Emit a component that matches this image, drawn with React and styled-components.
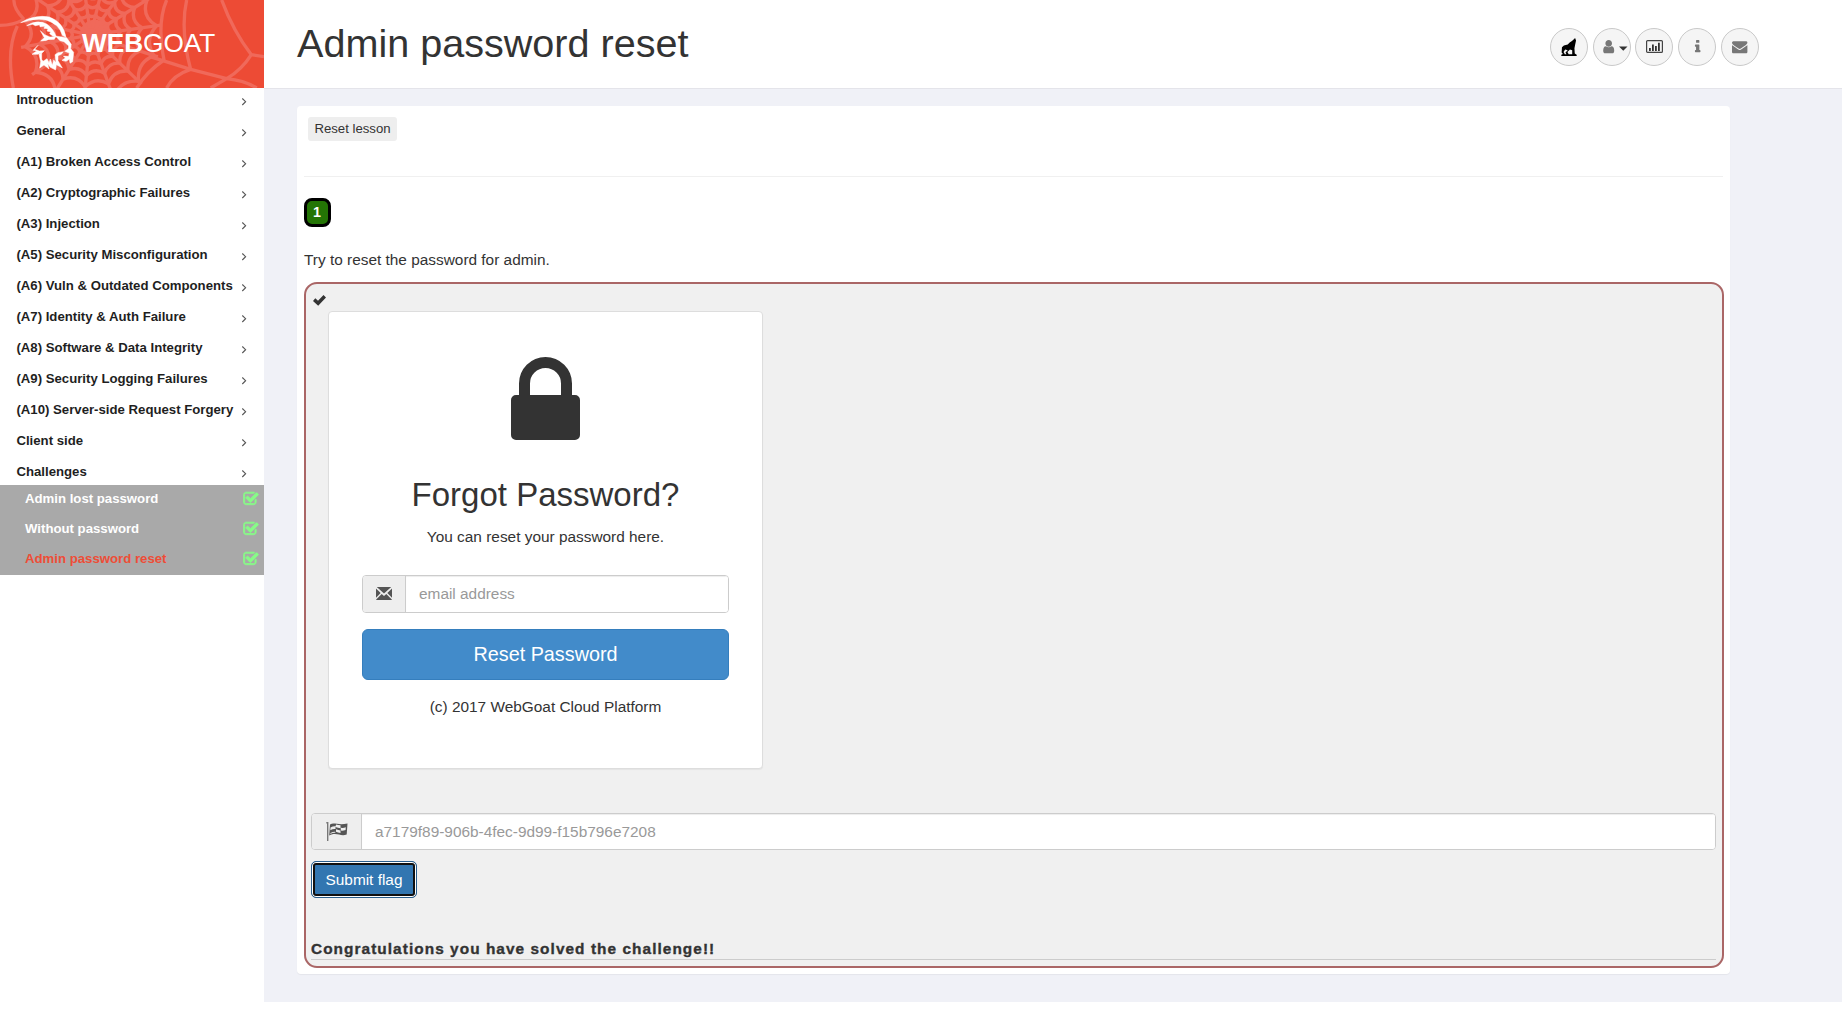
import React from "react";
import styled, { createGlobalStyle } from "styled-components";

const Global = createGlobalStyle`
  * { box-sizing: border-box; }
  body { margin: 0; background: #fff; color: #333; font: 15.4px/22px "Liberation Sans", Arial, sans-serif; overflow: hidden; }
  button, input { font-family: inherit; margin: 0; }
  svg { display: block; flex: none; }
`;

const Page = styled.div`display: grid; grid-template-columns: 264px 1fr; height: 1009px;`;
const Sidebar = styled.aside`background: #fff;`;
const Brand = styled.div`
  height: 88px; background: #ed4b35; display: grid; overflow: hidden; align-items: center;
  > * { grid-area: 1 / 1; }
`;
const BrandName = styled.div`
  padding: 0 0 3px 82px; color: #fff; font-size: 26.2px; line-height: 30px;
`;
const Menu = styled.nav`display: flex; flex-direction: column;`;
const MenuItem = styled.a`
  display: flex; justify-content: space-between; height: ${(p) => (p.$open ? 25 : 31)}px;
  padding: 0 17px 0 16.4px; color: #1f1f1f; font-size: 13.2px; line-height: 23px; font-weight: 700; white-space: nowrap;
  svg { margin-top: 9px; }
`;
const SubMenu = styled.div`background: #a9a9a9;`;
const SubItem = styled.a`
  display: flex; justify-content: space-between; height: 30px; padding: 0 5.500px 0 25px;
  color: ${(p) => (p.$active ? "#ee4d37" : "#fff")}; font-size: 13.2px; line-height: 27px; font-weight: 700;
  svg { margin-top: 6px; }
`;
const Main = styled.div`display: flex; flex-direction: column; min-width: 0;`;
const Header = styled.header`
  height: 89px; flex: none; border-bottom: 1px solid #e4e4ea; background: #fff;
  display: flex; justify-content: space-between; padding: 0 83px 0 33px;
`;
const Title = styled.h1`margin: 21px 0 0; font-size: 39.6px; line-height: 44px; font-weight: 400;`;
const Tools = styled.div`display: flex; gap: 4.8px; padding-top: 28px;`;
const Tool = styled.button`
  width: 38px; height: 38px; border: 1px solid #c9c9c9; border-radius: 50%; background: #f5f5f5; color: #777;
  padding: 0 0 1px ${(p) => p.$indent || 0}px; display: flex; align-items: center; justify-content: center;
`;
const Body = styled.main`height: 913px; background: #f0f1f7; padding: 17px 112px 28px 33px;`;
const Card = styled.section`
  height: 868px; background: #fff; border-radius: 4px; padding: 11px 6px 0 7px; box-shadow: 0 1px 1px rgba(0,0,0,.05);
`;
const ResetLesson = styled.button`
  display: block; margin-left: 4px; width: 89px; height: 24px; border: 0; border-radius: 3px; padding: 0;
  background: #eee; color: #333; font-size: 13.2px; line-height: 24px;
`;
const Rule = styled.div`height: 1px; margin: 35px 1px 0 0; background: #f0f0f0;`;
const PageBadge = styled.div`
  width: 27px; height: 29px; margin-top: 21px; border: 3px solid #000; border-radius: 8px; background: #247505;
  padding-right: 1px; color: #fff; font-size: 14.3px; font-weight: 700; line-height: 22px; text-align: center;
`;
const Intro = styled.p`margin: 22px 0 11px;`;
const Attack = styled.div`
  width: 1420px; height: 686px; border: 2px solid #a66; border-radius: 13px; background: #f0f0f0; padding: 0 6px 0 5px;
`;
const CheckRow = styled.div`height: 27px; padding: 11px 0 0 1.500px;`;
const Panel = styled.div`
  width: 435px; height: 458px; margin-left: 17px; border: 1px solid #ddd; border-radius: 4px; background: #fff;
  box-shadow: 0 1px 1px rgba(0,0,0,.05); padding: 45px 33px 0; display: flex; flex-direction: column; align-items: center;
`;
const PanelTitle = styled.h2`margin: 37px 0 13px; font-size: 33px; line-height: 36px; font-weight: 400;`;
const InputGroup = styled.div`
  display: flex; width: 100%; height: ${(p) => p.$height}px; margin-top: ${(p) => p.$top}px;
  border: 1px solid #ccc; border-radius: 4px; background: #fff; overflow: hidden;
`;
const Addon = styled.span`
  width: ${(p) => p.$width}px; flex: none; border-right: 1px solid #ccc; background: #eee; color: #555;
  display: flex; align-items: center; justify-content: center;
`;
const Field = styled.input`
  flex: 1; min-width: 0; border: 0; outline: 0; padding: 0 13px; font-size: 15.4px; background: #fff;
  box-shadow: inset 0 1px 1px rgba(0,0,0,.075);
  &::placeholder { color: #999; opacity: 1; }
`;
const ResetPassword = styled.button`
  width: 100%; height: 51px; margin: 16.5px 0 16px; border: 1px solid #357ebd; border-radius: 6px; background: #428bca;
  color: #fff; font-size: 19.8px; line-height: 28px; padding: 0 0 1px;
`;
const Submit = styled.button`
  display: block; width: 106px; height: 37px; margin-top: 11px; border: 1px solid #285e8e; border-radius: 5px; padding: 0;
  background: #3276b1; color: #fff; font-size: 15.4px; box-shadow: inset 0 0 0 1px #fff, inset 0 0 0 3px #101010;
`;
const Feedback = styled.div`
  margin-top: 41px; height: 21px; border-bottom: 1px solid #ccc; font-weight: 700; line-height: 20px; letter-spacing: 1.05px;
  -webkit-text-stroke: .35px #333;
`;

const polar = (r, a) => [272 + r * Math.cos(a), 105 + r * Math.sin(a)];
const angles = [-168, -146, -122, -98, -76, -54, -32, -8, 18, 44, 70, 96, 122, 146, 170, 192].map((d) => (d * Math.PI) / 180);
const rings = [62, 92, 122, 156, 200];
const ringPath = (r) =>
  angles.slice(1).map((a, i) => {
    const p = polar(r, angles[i]);
    const q = polar(r, a);
    const c = polar(r * 0.8, (angles[i] + a) / 2);
    return `M${p} Q${c} ${q}`;
  }).join(" ");

const Web = () => (
  <svg width="264" height="88" viewBox="0 0 792 264" fill="none" stroke="#f0695a" strokeWidth="10">
    <circle cx="285" cy="105" r="46" fill="#f0695a" stroke="none" />
    {angles.slice(0, -1).map((a) => <path key={a} d={`M${polar(20, a)} L${polar(212, a)}`} />)}
    {rings.map((r) => <path key={r} d={ringPath(r)} />)}
    <path d="M0 76Q40 76 72 58M72 58Q40 25 42 0M52 78Q18 150 40 264M500 0Q470 70 492 180Q440 215 410 264M560 0Q540 90 572 208Q520 225 500 264M665 0Q700 95 754 164L792 170M754 164Q725 210 680 236L632 264M450 170L572 208L680 236Q735 242 770 264" />
  </svg>
);

const Goat = () => (
  <svg width="264" height="88" viewBox="0 0 792 264" fill="#fff" stroke="#fff" strokeWidth="1.5">
    <path d="M62 68Q105 43 148 51Q190 66 198 112L187 106Q178 72 138 60Q100 55 62 68Z" />
    <path d="M80 77Q112 57 140 72Q162 88 169 111L158 108L149 101L152 96L141 93L144 87L132 85L134 79L120 80L119 74L106 77L98 73Z" />
    <path d="M121 92L134 104L150 111L167 110L163 118L145 119L137 122L122 123L133 113Z" />
    <path d="M166 108L200 113L214 133L212 146L221 157L218 185L210 190L208 178L198 184L186 181L196 174L190 168L206 169L208 159L194 154L205 146L206 138L192 125L180 122Z" />
    <path d="M114 136L104 148L118 153L133 152L127 158L113 163L96 163L110 153L99 151Z" />
    <path d="M117 163L125 158L125 178L129 184L141 176L147 188L151 177L157 196L161 180L168 187L165 164L174 158L190 155L184 163L174 167L174 182L187 204L169 194L167 210L151 202L143 191L147 207L132 195L119 204L122 185Z" />
  </svg>
);

const Fa = ({ d, size, color, bold }) => (
  <svg width={size} height={size} viewBox="0 0 1792 1792" fill={color || "currentColor"} stroke={color} strokeWidth={bold || 0}><path d={d} /></svg>
);
const CHECK_SQUARE = "M1472 930v318q0 119-84.5 203.5t-203.5 84.5h-832q-119 0-203.5-84.5t-84.5-203.5v-832q0-119 84.5-203.5t203.5-84.5h832q63 0 117 25 15 7 18 23 3 17-9 29l-49 49q-10 10-23 10-3 0-9-2-23-6-45-6h-832q-66 0-113 47t-47 113v832q0 66 47 113t113 47h832q66 0 113-47t47-113v-254q0-13 9-22l64-64q10-10 23-10 6 0 12 3 20 8 20 29zm231-489l-814 814q-24 24-57 24t-57-24l-430-430q-24-24-24-57t24-57l110-110q24-24 57-24t57 24l263 263 647-647q24-24 57-24t57 24l110 110q24 24 24 57t-24 57z";
const USER = "M1536 1399q0 109-62.5 187t-150.5 78h-854q-88 0-150.5-78t-62.5-187q0-85 8.5-160.5t31.5-152 58.5-131 94-89 134.5-34.5q131 128 313 128t313-128q76 0 134.5 34.5t94 89 58.5 131 31.5 152 8.5 160.5zm-256-887q0 159-112.5 271.5t-271.5 112.5-271.5-112.5-112.5-271.5 112.5-271.5 271.5-112.5 271.5 112.5 112.5 271.5z";
const INFO = "M1216 1344v128q0 26-19 45t-45 19h-512q-26 0-45-19t-19-45v-128q0-26 19-45t45-19h64v-384h-64q-26 0-45-19t-19-45v-128q0-26 19-45t45-19h384q26 0 45 19t19 45v576h64q26 0 45 19t19 45zm-128-1152v192q0 26-19 45t-45 19h-256q-26 0-45-19t-19-45v-192q0-26 19-45t45-19h256q26 0 45 19t19 45z";
const ENVELOPE = "M1792 710v794q0 66-47 113t-113 47h-1472q-66 0-113-47t-47-113v-794q44 49 101 87 362 246 497 345 57 42 92.5 65.5t94.5 48 110 24.5h2q51 0 110-24.5t94.5-48 92.5-65.5q170-123 498-345 57-39 100-87zm0-294q0 79-49 151t-122 123q-376 261-468 325-10 7-42.5 31t-54 38.5-52 32.5-57.5 27-50 9h-2q-23 0-50-9t-57.5-27-52-32.5-54-38.5-42.5-31q-91-64-262-182.5t-205-142.5q-62-42-117-115.5t-55-136.5q0-78 41.5-130t118.5-52h1472q65 0 112.5 47t47.5 113z";

const Chevron = () => (
  <svg width="6" height="9" viewBox="0 0 6 9" fill="none" stroke="#555" strokeWidth="1.1"><path d="M1.300 1.500L4.600 4.700L1.300 8" /></svg>
);
const Wolf = () => (
  <svg width="16" height="18" viewBox="0 0 50 56" fill="#000">
    <path d="M44 0L47 8L44 22L42 32L43 48L49 52V56H1V52L6 50L2 45L3 29L9 23L21 20L28 13L32 11L37 7ZM13 36L8 44L12 51H17L14 45L21 38ZM28 36L20 44L24 51H35V38Z" fillRule="evenodd" />
  </svg>
);
const Chart = () => (
  <svg width="17" height="13" viewBox="0 0 17 13">
    <rect x=".6" y=".6" width="15.8" height="11.800" rx="1" fill="none" stroke="#444" strokeWidth="1.2" />
    <path d="M3 8h1.800v3H3zM6 4.500h1.800V11H6zM9 6h1.800v5H9zM12 2.800h1.800V11H12z" fill="#333" />
  </svg>
);
const Lock = () => (
  <svg width="69" height="83" viewBox="0 0 69 83" fill="#333">
    <path d="M8 38V26.500a26.500 26.500 0 0 1 53 0V38h3a5 5 0 0 1 5 5v35a5 5 0 0 1-5 5H5a5 5 0 0 1-5-5V43a5 5 0 0 1 5-5ZM19 38H50V26.500a15.500 15.500 0 0 0-31 0Z" />
  </svg>
);
const Mail = () => (
  <svg width="16" height="13" viewBox="0 0 16 13" fill="#555">
    <path d="M.8 0H15.200L8 6.600ZM0 1.500L4.700 6L0 10.800ZM16 1.500V10.800L11.300 6ZM5.700 7L8 9.100L10.300 7L15.800 12.400V13H.2V12.400Z" />
  </svg>
);
const Flag = () => (
  <svg width="22" height="19" viewBox="0 0 22 19">
    <path d="M.3 0H2.400V19H1V1.500H.3Z" fill="#777" />
    <path d="M4 2.500C8-.2 12 3.800 21.500 1.500L20.700 12.500C14 15 11 9.500 3.200 13.500Z" fill="#555" />
    <path d="M4.500 5.500Q7 4 9.500 4.200V7Q7 6.600 4.300 8.300ZM10 2.600Q12 3.200 14.500 3.300V6.200Q12 6 9.500 5ZM10 7.300Q12.500 8.300 14.500 8.600V11Q12 10.500 10 9.700ZM14.800 5.800Q17.500 6.200 19.800 5.200L19.600 8Q17 9 14.800 8.600ZM4.500 11Q7 9.600 9.300 9.700V10.800Q7 10.500 4.300 11.900Z" fill="#eee" />
  </svg>
);
const Tick = () => (
  <svg width="13" height="11" viewBox="0 0 13 11" fill="#333"><path d="M0 6L2.300 3.300L5 5.800L10.500 0L13 2.400L5.200 10.800Z" /></svg>
);

const lessons = ["Introduction", "General", "(A1) Broken Access Control", "(A2) Cryptographic Failures", "(A3) Injection", "(A5) Security Misconfiguration", "(A6) Vuln & Outdated Components", "(A7) Identity & Auth Failure", "(A8) Software & Data Integrity", "(A9) Security Logging Failures", "(A10) Server-side Request Forgery", "Client side", "Challenges"];
const challenges = ["Admin lost password", "Without password", "Admin password reset"];

export default function App() {
  return (
    <Page>
      <Global />
      <Sidebar>
        <Brand>
          <Web />
          <Goat />
          <BrandName><b>WEB</b>GOAT</BrandName>
        </Brand>
        <Menu>
          {lessons.map((name) => (
            <MenuItem key={name} $open={name === "Challenges"}>{name}<Chevron /></MenuItem>
          ))}
          <SubMenu>
            {challenges.map((name, i) => (
              <SubItem key={name} $active={i === 2}>{name}<Fa d={CHECK_SQUARE} size={16} color="#88fb88" bold={90} /></SubItem>
            ))}
          </SubMenu>
        </Menu>
      </Sidebar>
      <Main>
        <Header>
          <Title>Admin password reset</Title>
          <Tools>
            <Tool><Wolf /></Tool>
            <Tool $indent={5}>
              <svg width="27" height="14" viewBox="0 0 27 14">
                <svg x="0" y="-1" width="15.400" height="15.400" viewBox="0 0 1792 1792" fill="#777"><path d={USER} /></svg>
                <path d="M18 6.500H26.500L22.250 10.800Z" fill="#333" />
              </svg>
            </Tool>
            <Tool><Chart /></Tool>
            <Tool><Fa d={INFO} size={15.4} /></Tool>
            <Tool><Fa d={ENVELOPE} size={15.4} /></Tool>
          </Tools>
        </Header>
        <Body>
          <Card>
            <ResetLesson>Reset lesson</ResetLesson>
            <Rule />
            <PageBadge>1</PageBadge>
            <Intro>Try to reset the password for admin.</Intro>
            <Attack>
              <CheckRow><Tick /></CheckRow>
              <Panel>
                <Lock />
                <PanelTitle>Forgot Password?</PanelTitle>
                <div>You can reset your password here.</div>
                <InputGroup $height={37.5} $top={27}>
                  <Addon $width={43}><Mail /></Addon>
                  <Field placeholder="email address" />
                </InputGroup>
                <ResetPassword>Reset Password</ResetPassword>
                <div>(c) 2017 WebGoat Cloud Platform</div>
              </Panel>
              <InputGroup $height={37} $top={44}>
                <Addon $width={50}><Flag /></Addon>
                <Field placeholder="a7179f89-906b-4fec-9d99-f15b796e7208" />
              </InputGroup>
              <Submit>Submit flag</Submit>
              <Feedback>Congratulations you have solved the challenge!!</Feedback>
            </Attack>
          </Card>
        </Body>
      </Main>
    </Page>
  );
}
